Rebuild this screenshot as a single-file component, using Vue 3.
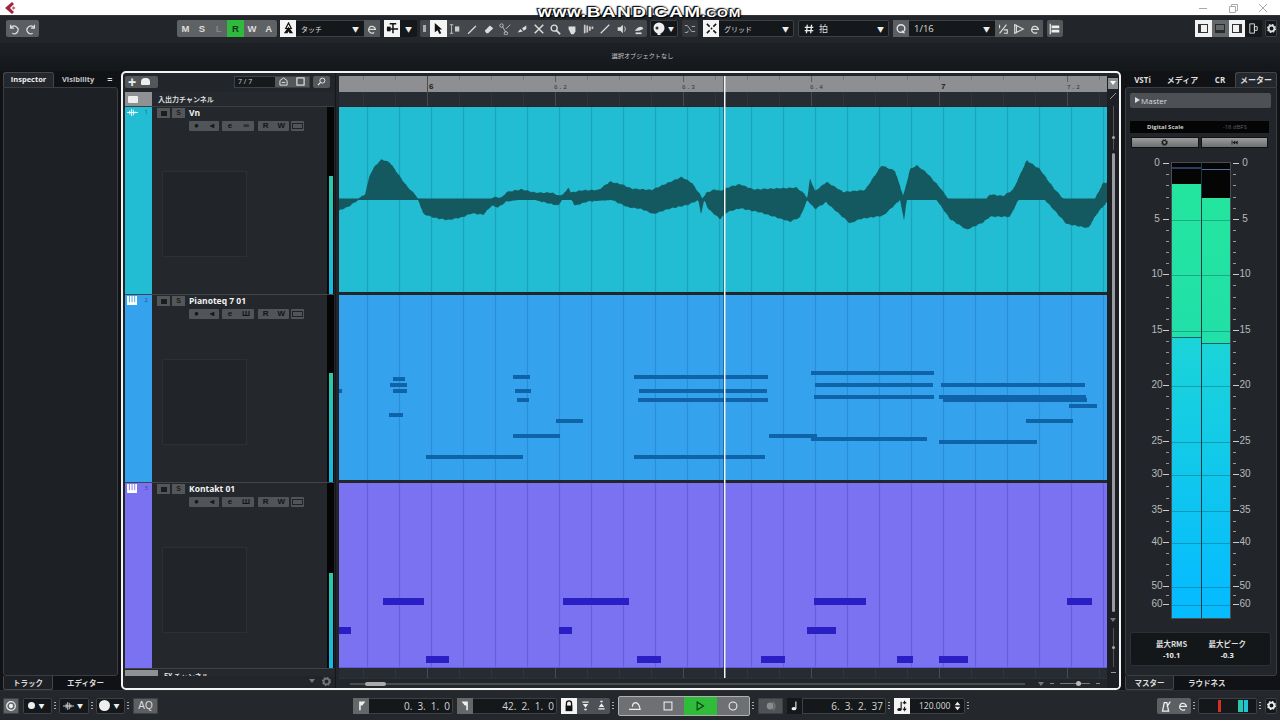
<script setup>
const toolsA = ['M','S','L','R','W','A']
const beats = []
for (let x = 363; x <= 1099; x += 32) beats.push(x)
const lane = (x) => x - 339

const majors = [427, 555, 683, 811, 939, 1067]
const rulerLabels = [
  { x: 429, t: '6', big: true }, { x: 554, t: '6.2' }, { x: 682, t: '6.3' }, { x: 810, t: '6.4' },
  { x: 941, t: '7', big: true }, { x: 1067, t: '7.2' },
]

const CENTER = 199.3
const z8 = (p) => [335 + p[0] / 3, 130 + p[1] / 3]
const z9 = (p) => [720 + p[0] / 3, 130 + p[1] / 3]
const topAnchors = [
  ...[[12,208],[70,208],[90,195],[105,135],[120,110],[140,90],[165,100],[190,135],[215,170],[240,195],[250,208],[470,208],[475,203],[500,205],[515,188],[560,180],[600,190],[650,190],[675,200],[695,185],[700,172],[708,190],[740,183],[790,182],[825,157],[860,165],[890,178],[950,182],[1000,160],[1040,143],[1070,160],[1095,195],[1102,208],[1115,190],[1140,180]].map(z8),
  ...[[0,185],[30,172],[60,165],[100,180],[230,175],[255,195],[262,208],[270,147],[285,185],[320,158],[370,188],[435,182],[485,108],[525,125],[550,200],[570,120],[590,108],[620,130],[660,175],[685,208],[800,208],[810,195],[850,200],[880,180],[920,93],[960,120],[1000,175],[1030,208],[1125,208],[1150,160],[1162,160]].map(z9),
]
const botAnchors = [
  ...[[12,240],[40,228],[70,208],[250,208],[265,250],[300,262],[340,268],[380,260],[410,248],[445,252],[470,225],[490,230],[515,212],[550,208],[600,208],[640,218],[670,225],[680,208],[710,208],[720,225],[760,212],[830,208],[880,230],[920,235],[955,250],[1000,235],[1060,222],[1090,208],[1098,250],[1108,208],[1120,235]].map(z8),
  ...[[0,265],[20,245],[60,233],[120,245],[210,273],[240,260],[262,208],[285,235],[318,215],[390,278],[420,265],[490,255],[540,208],[552,270],[560,208],[650,208],[690,265],[740,297],[790,275],[810,258],[870,258],[895,208],[975,208],[1040,280],[1105,292],[1130,250],[1160,215]].map(z9),
]
const sample = (pts, phase, dir) => {
  const out = []
  let i = 0
  for (let x = 339; x <= 1108; x += 1) {
    while (i < pts.length - 2 && pts[i + 1][0] < x) i++
    const a = pts[i]
    const b = pts[i + 1]
    const t = Math.min(1, Math.max(0, (x - a[0]) / (b[0] - a[0])))
    let y = a[1] + (b[1] - a[1]) * t
    if (Math.abs(y - CENTER) > 1) y += (Math.sin(x * 2.7 + phase) + Math.sin(x * 5.3 + phase * 2)) * 0.45
    out.push([x - 339, y - 107 + dir * 0.7])
  }
  return out
}
const fmt = (p) => `${p[0]},${p[1].toFixed(1)}`
const wavePoints = [...sample(topAnchors, 1, -1), ...sample(botAnchors, 3, 1).reverse()].map(fmt).join(' ')

const blueNotes = [
  [393,377,12,4],[390,383,17,4],[393,389,14,4],[339,389,3,4],[389,413,14,4],
  [513,375,17,4],[515,389,16,4],[517,398,12,4],[556,419,27,4],[513,434,47,4],[426,455,97,4],
  [634,375,134,4],[639,389,128,4],[638,398,130,4],[634,455,131,4],
  [811,371,123,4],[815,383,118,4],[814,395,120,4],[769,434,48,4],[811,437,116,4],
  [941,383,144,4],[939,395,147,4],[943,398,144,4],[1069,404,28,4],[1026,419,47,4],[939,440,98,4],
]
const purpleNotes = [
  [383,598,41,7],[563,598,66,7],[814,598,52,7],[1067,598,25,7],
  [339,627,12,7],[559,627,13,7],[807,627,29,7],
  [426,656,23,7],[637,656,24,7],[761,656,24,7],[897,656,16,7],[939,656,29,7],
]
const tracks = [
  { n: 1, name: 'Vn', cls: 'teal', icon: 'audio', level: 118, mid: 'link', notes: [], top: 107 },
  { n: 2, name: 'Pianoteq 7 01', cls: 'blue', icon: 'keys', level: 109, mid: 'keys', notes: blueNotes, top: 295 },
  { n: 3, name: 'Kontakt 01', cls: 'purple', icon: 'keys', level: 95, mid: 'keys', notes: purpleNotes, top: 483 },
]
const noteStyle = (n, top) => ({ left: `${n[0] - 339}px`, top: `${n[1] - top}px`, width: `${n[2]}px`, height: `${n[3]}px` })

const scale = [
  { v: '0', y: 0 }, { v: '5', y: 56 }, { v: '10', y: 111 }, { v: '15', y: 167 }, { v: '20', y: 222 },
  { v: '25', y: 278 }, { v: '30', y: 311 }, { v: '35', y: 347 }, { v: '40', y: 379 }, { v: '50', y: 423 }, { v: '60', y: 441 },
]
const ticks = [11,22,34,45,67,78,89,100,122,134,145,156,178,189,200,211,233,245,256,267,289,300,323,335,358,368,390,401,412,432]
</script>

<template>
  <div class="app">
    <header class="title">
      <svg class="logo" viewBox="0 0 12 12"><path d="M7 0 0 6l7 6 2-2-4-4 4-4z" fill="#a3243a"/><path d="M8.500 4.200 10.500 6l-2 1.800L6.800 6z" fill="#c9606f"/></svg>
      <div class="winbtns">
        <svg viewBox="0 0 10 10"><path d="M1 5.500h8" stroke="#aaa"/></svg>
        <svg viewBox="0 0 10 10"><path d="M1.500 3.500h6v6h-6zM3.500 3.500v-2h6v6h-2" fill="none" stroke="#aaa"/></svg>
        <svg viewBox="0 0 10 10"><path d="M1 1l8 8M9 1 1 9" stroke="#aaa"/></svg>
      </div>
    </header>
    <div class="watermark"><span class="www">www.</span><b>BANDICAM</b><span class="com">.COM</span></div>

    <div class="toolbar">
      <div class="tgroup undo">
        <svg class="ti" viewBox="0 0 14 14"><path d="M3 2v4h4M3.500 5.500A4.500 4.500 0 1 1 5 12" fill="none" stroke="#ddd" stroke-width="1.500"/></svg>
        <svg class="ti" viewBox="0 0 14 14"><path d="M11 2v4H7M10.500 5.500A4.500 4.500 0 1 0 9 12" fill="none" stroke="#ddd" stroke-width="1.500"/></svg>
      </div>
      <div class="tgroup mode">
        <span v-for="t in toolsA" :key="t" class="mbtn" :class="{ on: t === 'R', dim: t === 'L' }">{{ t }}</span>
      </div>
      <div class="tgroup drop auto">
        <span class="white-ico"><svg viewBox="0 0 14 14"><path d="M7 1 4 7h6z" fill="none" stroke="#111" stroke-width="1.300"/><path d="M7 5l-5 7h4l1-2 1 2h4z" fill="#111"/></svg></span>
        <span class="dd-text">タッチ</span><span class="arrow">▼</span>
        <span class="gbtn"><svg viewBox="0 0 14 14"><path d="M3 7.500h8A4 4 0 1 0 9.500 11" fill="none" stroke="#ddd" stroke-width="1.400"/></svg></span>
      </div>
      <div class="tgroup snapd">
        <span class="white-ico"><svg viewBox="0 0 14 14"><path d="M4 2h7M7.500 2v10M1 7.500h12" stroke="#111" stroke-width="1.600" fill="none"/><path d="M1 5h4v5H1z" fill="#111"/></svg></span>
        <span class="arrow lone">▼</span>
      </div>
      <div class="tgroup tools">
        <span class="handle"></span>
        <span class="white-ico arrowtool"><svg viewBox="0 0 14 14"><path d="M3 1v10l3-2 2 4 2-1-2-4h3z" fill="#111"/></svg></span>
        <svg class="ti" viewBox="0 0 14 14"><path d="M1 2h4M3 2v10M1 12h4" stroke="#ccc" fill="none"/><rect x="7" y="4" width="5" height="6" fill="#ccc"/></svg>
        <svg class="ti" viewBox="0 0 14 14"><path d="M2 12 11 3l1 1-9 9z" fill="#ddd"/></svg>
        <svg class="ti" viewBox="0 0 14 14"><path d="M2 9 8 3l4 3-6 6H4z" fill="#ddd"/></svg>
        <svg class="ti" viewBox="0 0 14 14"><circle cx="3" cy="3" r="2" fill="none" stroke="#ccc"/><circle cx="8" cy="12" r="2" fill="none" stroke="#ccc"/><path d="M4 4l4 7M8 7l5-5" stroke="#ccc" fill="none"/></svg>
        <svg class="ti" viewBox="0 0 14 14"><path d="M2 11l3-4 3 3z" fill="#ddd"/><path d="M7 6l5-3v4l-3 2z" fill="#ddd"/></svg>
        <svg class="ti" viewBox="0 0 14 14"><path d="M2 2l10 10M12 2 2 12" stroke="#ddd" stroke-width="1.700"/></svg>
        <svg class="ti" viewBox="0 0 14 14"><circle cx="6" cy="6" r="3.500" fill="none" stroke="#ddd" stroke-width="1.600"/><path d="M8.500 8.500 13 13" stroke="#ddd" stroke-width="2"/></svg>
        <svg class="ti" viewBox="0 0 14 14"><path d="M3 7V4h8v6l-2 3H6z" fill="#ddd"/></svg>
        <svg class="ti" viewBox="0 0 14 14"><path d="M1 2h2v10H1zM4 3h2v8H4zM7 4h2v5H7zM10 4h2v3h-2z" fill="#ccc"/></svg>
        <svg class="ti" viewBox="0 0 14 14"><path d="M2 12 12 2" stroke="#ddd" stroke-width="1.400"/></svg>
        <svg class="ti" viewBox="0 0 14 14"><path d="M2 5h3l3-3v10L5 9H2z" fill="#ddd"/><path d="M10 4q2 3 0 6" stroke="#ddd" fill="none"/></svg>
        <svg class="ti" viewBox="0 0 14 14"><path d="M2 9q5-6 9-4l1 2-5 2z" fill="#ddd"/><path d="M3 12h7" stroke="#ddd" stroke-width="2"/></svg>
      </div>
      <div class="tgroup color">
        <svg class="ti c" viewBox="0 0 14 14"><circle cx="7" cy="6" r="5.500" fill="#eee"/><circle cx="5" cy="6" r="1.500" fill="#333"/><path d="M7 9v4" stroke="#eee" stroke-width="3"/></svg>
        <span class="arrow lone s">▼</span>
      </div>
      <div class="tgroup one"><svg class="ti" viewBox="0 0 14 14"><path d="M1 3h3l5 7h4M9 4h4M1 11h3l1-2" stroke="#bbb" fill="none"/></svg></div>
      <div class="tgroup drop grid">
        <span class="white-ico"><svg viewBox="0 0 14 14"><path d="M2 2l3 3M12 2 9 5M2 12l3-3M12 12 9 9" stroke="#111" stroke-width="1.600"/><circle cx="7" cy="7" r="1" fill="#111"/></svg></span>
        <span class="dd-text">グリッド</span><span class="arrow">▼</span>
      </div>
      <div class="tgroup drop beat">
        <svg class="ti hash" viewBox="0 0 14 14"><path d="M5 2 4 12M10 2 9 12M2 5h10M2 9h10" stroke="#eee" stroke-width="1.500"/></svg>
        <span class="dd-text han">拍</span><span class="arrow">▼</span>
      </div>
      <div class="tgroup drop quant">
        <span class="gbtn q"><svg viewBox="0 0 14 14"><circle cx="7" cy="6.500" r="4.500" fill="none" stroke="#e4e4e4" stroke-width="1.600"/><path d="M8 9l3 3" stroke="#e4e4e4" stroke-width="1.600"/></svg></span>
        <span class="dd-text q16">1/16</span><span class="arrow">▼</span>
        <span class="gbtn"><svg viewBox="0 0 14 14"><path d="M3 2v4M11 2 3 12M8 8h4v4H8" fill="none" stroke="#ddd" stroke-width="1.300"/></svg></span>
        <span class="gbtn"><svg viewBox="0 0 14 14"><path d="M2 2v10l10-5zM4 2v10" fill="none" stroke="#ddd" stroke-width="1.300"/></svg></span>
        <span class="gbtn"><svg viewBox="0 0 14 14"><path d="M3 7.500h8A4 4 0 1 0 9.500 11" fill="none" stroke="#ddd" stroke-width="1.400"/></svg></span>
      </div>
      <div class="tgroup align"><svg class="ti" viewBox="0 0 14 14"><path d="M1.500 1v12" stroke="#eee" stroke-width="1.400"/><path d="M3 3h9v3H3zM3 8h9v3H3z" fill="#eee"/></svg></div>
      <div class="spacer"></div>
      <div class="tgroup panes">
        <span class="pane on"><i class="pl"></i></span>
        <span class="pane mid"><i class="pb"></i></span>
        <span class="pane on"><i class="pr"></i></span>
        <span class="pane dark"><svg viewBox="0 0 14 14"><path d="M3 2h5v10H3zM8 5h3v4H8z" fill="none" stroke="#ddd"/></svg></span>
      </div>
      <div class="tgroup cog"><svg class="gear" viewBox="0 0 10 10"><circle cx="5" cy="5" r="3.200" fill="none" stroke="#ddd" stroke-width="2"/><circle cx="5" cy="5" r="4.500" fill="none" stroke="#ddd" stroke-width="1.200" stroke-dasharray="1.800 1.730"/></svg></div>
    </div>

    <div class="infoline">選択オブジェクトなし</div>

    <div class="main">
      <aside class="left">
        <div class="tabs lefttabs">
          <span class="tab active">Inspector</span>
          <span class="tab">Visibility</span>
          <span class="eq">=</span>
        </div>
        <div class="panelbox"></div>
        <div class="tabs bottomtabs">
          <span class="btab box">トラック</span>
          <span class="btab open">エディター</span>
        </div>
      </aside>

      <section class="project">
        <div class="tracklist">
          <div class="tlhead">
            <div class="addgroup"><span class="plus">+</span><span class="dot"></span></div>
            <div class="count">
              <span class="cnum">7 / 7</span>
              <span class="cico"><svg viewBox="0 0 10 10"><path d="M1 9V4l4-3 4 3v5z" fill="none" stroke="#eee"/><path d="M3 6h4" stroke="#eee"/></svg></span>
              <span class="cico"><svg viewBox="0 0 10 10"><rect x="1" y="1" width="8" height="8" fill="none" stroke="#eee" stroke-width="1.200"/></svg></span>
            </div>
            <span class="search"><svg viewBox="0 0 10 10"><circle cx="6" cy="4" r="2.800" fill="none" stroke="#eee"/><path d="M4 6 1 9" stroke="#eee" stroke-width="1.300"/></svg></span>
          </div>
          <div class="folder">
            <span class="fswatch"><i></i></span><span class="fname">入出力チャンネル</span>
          </div>
          <div v-for="t in tracks" :key="t.n" class="track" :class="{ last: t.n === 3 }">
            <div class="swatch" :class="t.cls">
              <svg v-if="t.icon === 'audio'" viewBox="0 0 12 10" class="tico"><path d="M0 5h12M3 3v4M5 1v8M7 2v6M9 4v2" stroke="#fff" fill="none"/></svg>
              <svg v-else viewBox="0 0 12 10" class="tico"><path d="M0 0h2v7h1V0h2v7h1V0h2v7h1V0h2v10H0z" fill="#fff"/></svg>
              <span class="tnum">{{ t.n }}</span>
            </div>
            <div class="tbody">
              <div class="trow1">
                <span class="sb"><i></i></span><span class="sb">S</span>
                <span class="tname">{{ t.name }}</span>
              </div>
              <div class="trow2">
                <span class="sgroup"><span class="sbi">●</span><span class="sbi">◂</span></span>
                <span class="sgroup"><span class="sbi">e</span><span class="sbi">{{ t.mid === 'link' ? '∞' : 'Ш' }}</span></span>
                <span class="sgroup"><span class="sbi">R</span><span class="sbi">W</span></span>
                <span class="sgroup"><i class="film"></i></span>
              </div>
              <div class="thumb"></div>
            </div>
            <div class="meterstrip">
              <i :style="{ height: t.level + 'px' }"></i>
            </div>
          </div>
          <div class="folder fx">
            <span class="fswatch"></span><span class="fname">FX チャンネル</span>
          </div>
          <div class="tlfoot">
            <span class="tri"></span>
            <svg class="gear" viewBox="0 0 10 10"><circle cx="5" cy="5" r="3.200" fill="none" stroke="#777" stroke-width="2"/><circle cx="5" cy="5" r="4.500" fill="none" stroke="#777" stroke-width="1.200" stroke-dasharray="1.800 1.730"/></svg>
          </div>
        </div>

        <div class="eventarea">
          <div class="ruler">
            <span v-for="b in beats" :key="'r' + b" class="rtick" :style="{ left: lane(b) + 'px' }"></span>
            <span v-for="m in majors" :key="'rm' + m" class="rmajor" :class="{ bar: m === 427 || m === 939 }" :style="{ left: lane(m) + 'px' }"></span>
            <span v-for="l in rulerLabels" :key="l.t" class="rlabel" :class="{ big: l.big }" :style="{ left: lane(l.x) + 'px' }">{{ l.t }}</span>
          </div>
          <div class="subruler">
            <span v-for="b in beats" :key="'s' + b" class="stick" :style="{ left: lane(b) + 'px' }"></span>
            <span v-for="m in majors" :key="'sm' + m" class="smajor" :style="{ left: lane(m) + 'px' }"></span>
          </div>
          <div v-for="t in tracks" :key="'l' + t.n" class="lane" :class="t.cls">
            <span v-for="b in beats" :key="b" class="beat" :style="{ left: lane(b) + 'px' }"></span>
            <svg v-if="t.n === 1" class="wave" viewBox="0 0 769 185">
              <polygon :points="wavePoints" fill="#14595f" />
            </svg>
            <span v-for="(n, i) in t.notes" :key="i" class="note" :style="noteStyle(n, t.top)"></span>
          </div>
          <div class="subruler tail">
            <span v-for="b in beats" :key="'t' + b" class="stick" :style="{ left: lane(b) + 'px' }"></span>
            <span v-for="m in majors" :key="'tm' + m" class="smajor" :style="{ left: lane(m) + 'px' }"></span>
          </div>
          <div class="hscroll">
            <span class="track-line"><span class="hthumb"></span></span>
            <span class="zoomer"><span class="tri"></span><span class="minus"></span><span class="zline"><i></i></span><span class="minus"></span></span>
          </div>
          <span class="playhead"></span>
          <div class="vscroll">
            <span class="vmenu"></span>
            <svg class="pencil" viewBox="0 0 8 8"><path d="M1 7 7 1" stroke="#999"/></svg>
            <span class="vs1"><i></i></span>
            <span class="vs2"></span>
            <span class="tri vtri"></span>
            <span class="vs3"><i></i></span>
            <span class="vplus"></span>
          </div>
        </div>
      </section>

      <aside class="right">
        <div class="tabs righttabs">
          <span class="rtab w1">VSTi</span><span class="rtab w2">メディア</span><span class="rtab w3">CR</span><span class="rtab active">メーター</span>
        </div>
        <div class="rbox">
          <div class="master"><i class="mtri"></i>Master</div>
          <div class="digital"><b>Digital Scale</b><span>-18 dBFS</span></div>
          <div class="btnrow">
            <span class="rb"><svg viewBox="0 0 10 10"><circle cx="5" cy="5" r="2.800" fill="none" stroke="#111" stroke-width="1.600"/><circle cx="5" cy="5" r="4.300" fill="none" stroke="#111" stroke-width="1.200" stroke-dasharray="1.700 1.680"/></svg></span>
            <span class="rb"><svg viewBox="0 0 10 10"><path d="M1.500 2v6" stroke="#111" stroke-width="1.200"/><path d="M6 2v6L2.500 5zM9.500 2v6L6 5z" fill="#111"/></svg></span>
          </div>
          <div class="meter">
            <div class="scale lefts">
              <template v-for="s in scale" :key="s.v">
                <span class="snum" :style="{ top: s.y + 'px' }">{{ s.v }}</span>
                <span class="bigtick" :style="{ top: s.y + 'px' }"></span>
              </template>
              <span v-for="k in ticks" :key="k" class="smalltick" :style="{ top: k + 'px' }"></span>
            </div>
            <div class="bars">
              <div class="bar"><div class="peakline"></div><div class="fill f1"><i class="rms r1"></i></div></div>
              <div class="bar"><div class="peakline p2"></div><div class="fill f2"><i class="rms r2"></i></div></div>
              <span v-for="s in scale.slice(1)" :key="'g' + s.v" class="barmark" :style="{ top: s.y + 'px' }"></span>
            </div>
            <div class="scale rights">
              <template v-for="s in scale" :key="s.v">
                <span class="snum" :style="{ top: s.y + 'px' }">{{ s.v }}</span>
                <span class="bigtick" :style="{ top: s.y + 'px' }"></span>
              </template>
              <span v-for="k in ticks" :key="k" class="smalltick" :style="{ top: k + 'px' }"></span>
            </div>
          </div>
          <div class="maxbox">
            <div><span>最大RMS</span><b>-10.1</b></div>
            <div><span>最大ピーク</span><b>-0.3</b></div>
          </div>
        </div>
        <div class="tabs bottomtabs rb2">
          <span class="btab box">マスター</span>
          <span class="btab open">ラウドネス</span>
        </div>
      </aside>
    </div>

    <footer class="transport">
      <span class="pgroup cpu"><svg viewBox="0 0 14 14"><circle cx="7" cy="7" r="5" fill="none" stroke="#eee" stroke-width="1.400"/><circle cx="7" cy="7" r="2.500" fill="#eee"/></svg></span>
      <span class="pgroup dd d1"><i class="wdot"></i><span class="arrow lone s">▼</span></span><span class="hdl"></span>
      <span class="pgroup dd d2"><svg class="ti" viewBox="0 0 14 14"><path d="M0 7h14M4 4v6M6 2v10M8 3v8M10 5v4" stroke="#eee" fill="none"/></svg><span class="arrow lone s">▼</span></span><span class="hdl"></span>
      <span class="pgroup dd d3"><i class="wdot big"></i><span class="arrow lone s">▼</span></span><span class="hdl"></span>
      <span class="pgroup aq">AQ</span>
      <span class="flexgap"></span>
      <span class="locator"><span class="flag"><svg viewBox="0 0 14 14"><path d="M4 13V2h8L8 7H6v6z" fill="#eee"/></svg></span><span class="lnum">0.  3.  1.   0</span></span>
      <span class="locator l2"><span class="flag"><svg viewBox="0 0 14 14"><path d="M10 13V2H2l4 5h2v6z" fill="#eee"/></svg></span><span class="lnum">42.  2.  1.   0</span></span>
      <span class="lockg"><span class="lockw"><svg viewBox="0 0 14 14"><path d="M4 7V4a3 3 0 0 1 6 0v3" fill="none" stroke="#111" stroke-width="1.500"/><rect x="3" y="6.500" width="8" height="6.500" fill="#111"/></svg></span>
        <svg class="lk" viewBox="0 0 14 14"><path d="M3 2h8v1.500H3zM3.500 5h7L7 10zM5.500 11h3v2h-3z" fill="#eee"/></svg>
        <svg class="lk" viewBox="0 0 14 14"><path d="M5.500 1h3v2h-3zM7 4l3.500 5h-7zM3 10.500h8V12H3z" fill="#eee"/></svg>
      </span><span class="hdl"></span>
      <span class="ctrl">
        <span class="cb"><svg viewBox="0 0 16 14"><path d="M1 11h13Q13 4 9 3 5 3 5 8" fill="none" stroke="#eee" stroke-width="1.400"/></svg></span>
        <span class="cb"><svg viewBox="0 0 14 14"><rect x="1.500" y="1.500" width="11" height="11" fill="none" stroke="#eee" stroke-width="1.500"/></svg></span>
        <span class="cb play"><svg viewBox="0 0 14 14"><path d="M3 1.500v11l9-5.500z" fill="none" stroke="#0c3a12" stroke-width="1.500"/></svg></span>
        <span class="cb"><svg viewBox="0 0 14 14"><circle cx="7" cy="7" r="5.500" fill="none" stroke="#eee" stroke-width="1.500"/></svg></span>
      </span><span class="hdl"></span>
      <span class="pgroup pre"><svg viewBox="0 0 14 14"><circle cx="6" cy="7" r="4" fill="#8a8c8e"/><path d="M9 2a6 6 0 0 1 0 10" fill="none" stroke="#777" stroke-width="1.500"/></svg></span>
      <span class="locator l3"><span class="flag note2"><svg viewBox="0 0 14 14"><ellipse cx="5" cy="11" rx="3" ry="2.200" fill="#eee"/><path d="M7.500 11V2" stroke="#eee" stroke-width="1.400"/></svg></span><span class="lnum">6.  3.  2.  37</span></span><span class="hdl"></span>
      <span class="tempo"><span class="lockw"><svg viewBox="0 0 14 14"><ellipse cx="4" cy="11" rx="2.500" ry="1.800" fill="#111"/><path d="M6 11V2" stroke="#111" stroke-width="1.300"/><path d="M10 5V1M10 13V8M8 4l2-2 2 2M8 10l2 2 2-2" fill="none" stroke="#111" stroke-width="1.200"/></svg></span><span class="tnumb">120.000</span>
        <svg class="updown" viewBox="0 0 10 14"><path d="M1 6l4-5 4 5zM1 8l4 5 4-5z" fill="#eee"/></svg>
      </span><span class="hdl"></span>
      <span class="flexgap second"></span>
      <span class="metro">
        <svg class="ti" viewBox="0 0 14 14"><path d="M3 13 5 3h3l2 10zM8 8l4-6" fill="none" stroke="#eee" stroke-width="1.500"/></svg>
        <svg class="ti" viewBox="0 0 14 14"><path d="M3 7.500h8A4 4 0 1 0 9.500 11" fill="none" stroke="#eee" stroke-width="1.400"/></svg>
      </span><span class="hdl"></span>
      <span class="activity"><i class="red"></i><i class="cy"></i></span><span class="hdl"></span>
      <span class="pgroup gearb"><svg class="gear" viewBox="0 0 10 10"><circle cx="5" cy="5" r="3.200" fill="none" stroke="#eee" stroke-width="2"/><circle cx="5" cy="5" r="4.500" fill="none" stroke="#eee" stroke-width="1.200" stroke-dasharray="1.800 1.730"/></svg></span>
    </footer>
  </div>
</template>

<style>
html, body { margin: 0; background: #1c1f23; overflow: hidden; }
</style>

<style scoped>
.app { width: 1280px; height: 720px; display: flex; flex-direction: column; position: relative; overflow: hidden; background: #1a1d21; font-family: "Open Sans", "Noto Sans CJK JP", sans-serif; color: #ddd; }
.title { height: 16px; box-sizing: border-box; background: #fff; display: flex; align-items: center; justify-content: space-between; flex: none; border-bottom: 1px solid #333; }
.logo { width: 12px; height: 12px; margin-left: 5px; }
.winbtns { display: flex; gap: 20px; margin-right: 12px; }
.winbtns svg { width: 10px; height: 10px; }
.watermark { position: absolute; left: 541px; top: 3px; width: 197px; display: flex; align-items: baseline; justify-content: center; font-family: "Liberation Sans", sans-serif; color: #fff; line-height: 18px; text-shadow: 0 0 1px #000, 0 0 2px #000, 1px 1px 1px #000, -1px -1px 1px #000; z-index: 5; white-space: nowrap; transform: scaleX(1.27); }
.www { font-size: 14px; font-weight: 700; letter-spacing: .6px; }
.watermark b { font-size: 15px; font-weight: 700; letter-spacing: 1.100px; }
.com { font-size: 11px; font-weight: 700; letter-spacing: .6px; }

.toolbar { height: 27px; background: #22262a; display: flex; align-items: center; flex: none; padding: 0 3px 2px 6px; box-sizing: border-box; }
.tgroup { height: 17px; display: flex; align-items: center; border-radius: 2px; background: #5b5e62; flex: none; }
.undo { width: 33px; justify-content: space-around; margin-right: 138px; }
.mode { width: 100px; background: #5f6265; }
.mbtn { flex: 1; height: 17px; text-align: center; font: 700 9.500px/17px "Liberation Sans", sans-serif; color: #ddd; }
.mbtn.on { background: #2fba3e; color: #12361a; }
.mbtn.dim { color: #858585; }
.white-ico { width: 16px; height: 17px; background: #f4f4f4; display: flex; align-items: center; justify-content: center; flex: none; }
.white-ico svg { width: 13px; height: 13px; }
.drop { background: #15181b; box-shadow: inset 0 0 0 1px #3d4044; }
.auto { width: 100px; margin-left: 3px; }
.dd-text { font-size: 7px; color: #ddd; margin-left: 5px; flex: 1; }
.arrow { font-size: 7px; color: #eee; margin-right: 5px; }
.arrow.lone { margin: 0 auto; }
.arrow.s { margin: 0 2px; font-size: 6px; }
.gbtn { width: 16px; height: 17px; background: #54575a; display: flex; align-items: center; justify-content: center; flex: none; }
.gbtn svg { width: 12px; height: 12px; }
.snapd { width: 33px; margin-left: 4px; background: #15181b; }
.tools { width: 227px; margin-left: 3px; background: #44474b; }
.handle { width: 3px; height: 7px; background: #aaa; margin: 0 4px 0 3px; flex: none; }
.arrowtool { margin: 0; width: 17px; }
.ti { width: 12px; height: 12px; flex: none; }
.tools .ti { margin: 0 2.330px; }
.color { width: 28px; margin-left: 3px; background: #15181b; box-shadow: inset 0 0 0 1px #3d4044; padding-left: 2px; box-sizing: border-box; }
.ti.c { width: 14px; height: 14px; }
.one { width: 16px; margin-left: 4px; justify-content: center; background: #33363a; }
.grid { width: 91px; margin-left: 5px; }
.beat { width: 91px; margin-left: 4px; }
.hash { margin-left: 5px; }
.han { font-size: 9px; margin-left: 4px; }
.quant { width: 150px; margin-left: 4px; }
.gbtn.q { background: #5b5e62; }
.q16 { font-size: 9.500px; margin-left: 5px; }
.align { width: 16px; margin-left: 4px; justify-content: center; background: #55585b; }
.spacer { flex: 1; }
.panes { background: transparent; }
.pane { width: 16.750px; height: 17px; display: flex; align-items: center; justify-content: center; }
.pane.on { background: #f2f2f2; }
.pane.mid { background: #65686b; }
.pane.dark { background: #15181b; }
.pane svg { width: 13px; height: 13px; }
.pane i { display: block; width: 10px; height: 9px; border: 1px solid #333; box-sizing: border-box; }
.pane .pl { border-left-width: 3px; }
.pane .pb { border-bottom-width: 3px; border-color: #2a2a2a; }
.pane .pr { border-right-width: 3px; }
.cog { width: 12px; margin-left: 3px; justify-content: center; background: #15181b; box-shadow: inset 0 0 0 1px #3d4044; }
.gear { width: 9px; height: 9px; }

.infoline { height: 28px; flex: none; font-size: 6.200px; color: #c8c8c8; text-align: center; line-height: 26px; padding-left: 5px; box-sizing: border-box; background: linear-gradient(#1e2125, #14171a); }

.main { height: 619px; display: flex; flex: none; background: #101215; }
.left { width: 120px; flex: none; display: flex; flex-direction: column; padding: 1px 0 0 3px; box-sizing: border-box; }
.tabs { display: flex; align-items: center; flex: none; }
.lefttabs { height: 15px; font: 700 7.500px/15px "Open Sans", sans-serif; }
.tab { color: #c5c7c9; padding: 0 0 0 8px; }
.tab.active { background: #24272b; border-radius: 3px 3px 0 0; color: #eee; width: 51px; padding: 0; text-align: center; box-shadow: inset 1px 1px 0 #44474a, inset -1px 0 0 #44474a; height: 15px; }
.eq { margin-left: 13px; font-size: 9px; }
.panelbox { height: 589px; background: #1d2024; border: 1px solid #3a3d41; border-radius: 0 3px 3px 3px; margin-right: 2px; box-sizing: border-box; flex: none; }
.bottomtabs { height: 14px; font: 700 7.500px/14px "Noto Sans CJK JP", sans-serif; color: #ddd; }
.btab { height: 14px; }
.btab.box { width: 50px; text-align: center; background: #1d2024; border-radius: 0 0 3px 3px; box-shadow: inset 1px 0 0 #44474a, inset 0 -1px 0 #44474a, inset -1px 0 0 #44474a; }
.btab.open { flex: 1; padding-left: 14px; }

.project { width: 1000px; height: 619px; margin-left: 1px; box-sizing: border-box; border: 2px solid #f3f3f3; border-radius: 5px; background: #22262a; display: flex; flex: none; position: relative; overflow: hidden; }
.tracklist { width: 213px; flex: none; display: flex; flex-direction: column; padding: 0 1px 0 2px; box-sizing: border-box; border-right: 1px solid #15171a; margin-right: 3px; }
.tlhead { height: 19px; padding-bottom: 2px; box-sizing: border-box; display: flex; align-items: center; flex: none; }
.addgroup { width: 33px; height: 12px; background: #54575a; border-radius: 2px; display: flex; align-items: center; gap: 5px; padding-left: 3px; box-sizing: border-box; flex: none; }
.plus { font: 700 14px/12px "Liberation Sans", sans-serif; color: #eee; }
.dot { width: 9px; height: 7px; background: #eee; border-radius: 4px 4px 1px 1px; }
.count { margin-left: 76px; width: 76px; height: 12px; display: flex; background: #161a1d; border: 1px solid #3d4044; box-sizing: border-box; align-items: center; flex: none; }
.cnum { font-size: 7px; color: #ccc; flex: 1; padding-left: 3px; }
.cico { width: 17px; height: 10px; background: #55585b; display: flex; align-items: center; justify-content: center; }
.cico svg { width: 9px; height: 9px; }
.search { margin-left: 3px; width: 17px; height: 12px; background: #55585b; border-radius: 2px; display: flex; align-items: center; justify-content: center; flex: none; }
.search svg { width: 9px; height: 9px; }
.folder { height: 15px; display: flex; flex: none; align-items: center; background: #25292d; border-bottom: 1px solid #3c3f43; box-sizing: border-box; }
.fswatch { width: 27px; height: 14px; background: #8f9194; display: flex; align-items: center; flex: none; }
.fswatch i { display: block; width: 10px; height: 7px; margin-left: 3px; background: #eee; border-radius: 1px; }
.fname { font: 700 7px/14px "Noto Sans CJK JP", sans-serif; margin-left: 6px; color: #ddd; white-space: nowrap; }
.track { height: 188px; display: flex; flex: none; position: relative; border-bottom: 1px solid #41454a; box-sizing: border-box; }
.track.last { height: 186px; }
.swatch { width: 27px; flex: none; position: relative; }
.tico { position: absolute; left: 2px; top: 1px; width: 11px; height: 9px; }
.tnum { position: absolute; right: 4px; top: 1px; font-size: 6px; line-height: 8px; color: #123; opacity: .6; }
.teal { background: #22bdd3; }
.blue { background: #35a2ee; }
.purple { background: #7b72f2; }
.tbody { flex: 1; position: relative; background: #24272b; }
.trow1 { height: 10px; margin: 1px 0 0 5px; display: flex; align-items: center; gap: 2px; }
.sb { width: 13px; height: 10px; background: #54575a; color: #1a1a1a; font: 700 7px/10px "Liberation Sans", sans-serif; text-align: center; display: flex; align-items: center; justify-content: center; flex: none; }
.sb i { display: block; width: 6px; height: 5px; background: #1c1c1c; }
.tname { font: 700 8.500px/12px "Open Sans", sans-serif; color: #f2f2f2; margin-left: 2px; white-space: nowrap; }
.trow2 { height: 10px; margin: 3px 0 0 37px; display: flex; gap: 3px; }
.sgroup { width: 30px; height: 10px; background: #515458; border-radius: 1px; display: flex; align-items: center; justify-content: center; flex: none; }
.sgroup:nth-child(2) { width: 32px; }
.sgroup:nth-child(3) { width: 31px; margin-left: 1px; }
.sgroup:nth-child(4) { width: 13px; margin-left: -1px; }
.film { display: block; width: 9px; height: 4px; border: 1px solid #222; }
.sbi { flex: 1; text-align: center; font: 700 8px/10px "Liberation Sans", sans-serif; color: #141414; overflow: hidden; }
.thumb { position: absolute; left: 10px; top: 64px; width: 85px; height: 86px; background: #212428; border: 1px solid #2c2f33; box-sizing: border-box; }
.meterstrip { width: 7px; flex: none; background: #050505; display: flex; align-items: flex-end; justify-content: center; }
.meterstrip i { display: block; width: 4px; background: linear-gradient(#2ec8a8, #14b8e6); }
.fx { margin-top: 1px; height: 6px; overflow: hidden; border-bottom: none; align-items: flex-start; }
.fx .fswatch { height: 6px; width: 33px; }
.fx .fname { line-height: 12px; }
.tlfoot { height: 10px; display: flex; align-items: center; justify-content: flex-end; gap: 7px; padding-right: 3px; flex: none; }
.tri { display: block; width: 0; height: 0; border: 3.500px solid transparent; border-top: 4px solid #777; border-bottom: 0; }

.eventarea { flex: 1; position: relative; display: flex; flex-direction: column; padding-right: 12px; }
.ruler { height: 16px; margin-top: 3px; background: #8d8f92; position: relative; flex: none; }
.rtick { position: absolute; top: 0; height: 4px; width: 1px; background: #777; }
.rmajor { position: absolute; top: 0; height: 6px; width: 1px; background: #5a5c5f; }
.rmajor.bar { height: 16px; background: #4a4c4f; }
.rlabel { position: absolute; top: 7px; font: 6px/9px "Liberation Mono", monospace; color: #333; letter-spacing: 1px; }
.rlabel.big { top: 6px; font: 700 8px/9px "Liberation Sans", sans-serif; color: #1a1a1a; letter-spacing: 0; }
.subruler { height: 15px; position: relative; flex: none; background: #272c33; border-bottom: 1px solid #22262a; box-sizing: border-box; }
.stick { position: absolute; top: 0; bottom: 0; width: 1px; background: #30353c; }
.smajor { position: absolute; top: 0; bottom: 0; width: 1px; background: #474b50; }
.lane { height: 185px; margin-bottom: 3px; position: relative; flex: none; overflow: hidden; }
.lane.purple { margin-bottom: 0; height: 184px; }
.lane .beat { position: absolute; top: 0; bottom: 0; width: 1px; }
.teal .beat { background: #1aa3b9; box-shadow: 0 0 1px #1aa3b9; }
.blue .beat { background: #2a8fd6; box-shadow: 0 0 1px #2a8fd6; }
.purple .beat { background: #6860d8; box-shadow: 0 0 1px #6860d8; }
.wave { position: absolute; left: 0; top: 0; width: 769px; height: 185px; }
.note { position: absolute; }
.blue .note { background: #0f63a8; }
.purple .note { background: #2a1fc4; }
.tail { height: 11px; border-top: 1px solid #5a5fd0; border-bottom: none; }
.hscroll { height: 10px; display: flex; align-items: center; position: relative; flex: none; background: #22262a; border-top: 1px solid #2d3035; box-sizing: border-box; }
.track-line { width: 675px; margin-left: 11px; height: 2px; background: #4a4d50; position: relative; display: block; flex: none; }
.hthumb { position: absolute; left: 15px; width: 21px; height: 4px; top: -1px; background: #aaa; border-radius: 2px; }
.zoomer { display: flex; align-items: center; margin-left: 13px; gap: 6px; flex: none; }
.minus { width: 4px; height: 1px; background: #888; }
.zline { width: 30px; height: 1px; background: #777; position: relative; }
.zline i { position: absolute; left: 16px; top: -2px; width: 5px; height: 5px; border-radius: 50%; background: #bbb; }
.playhead { position: absolute; left: 385px; top: 3px; bottom: 10px; width: 1px; background: #f2f4f5; box-shadow: -1px 0 0 rgba(20, 40, 50, .45), 1px 0 0 rgba(230, 240, 240, .5); }
.vscroll { position: absolute; right: 0; top: 3px; bottom: 0; width: 12px; display: flex; flex-direction: column; align-items: center; background: #1c1f23; }
.vmenu { width: 10px; height: 11px; background: #8d8f92; flex: none; margin-top: 2px; position: relative; }
.vmenu::after { content: ""; position: absolute; left: 2px; top: 3px; border: 3px solid transparent; border-top: 4px solid #fff; border-bottom: 0; }
.pencil { width: 8px; height: 8px; margin: 3px 0; flex: none; }
.vs1 { width: 1px; height: 44px; background: #555; position: relative; display: block; margin-top: 3px; flex: none; }
.vs1 i { position: absolute; left: -1px; top: 30px; width: 3px; height: 3px; background: #aaa; border-radius: 50%; }
.vs2 { width: 3px; height: 459px; background: #9a9c9f; margin-top: 3px; display: block; border-radius: 2px; flex: none; }
.vtri { margin: 6px 0 3px; flex: none; }
.vs3 { width: 1px; height: 39px; background: #555; position: relative; display: block; margin-top: 3px; flex: none; }
.vs3 i { position: absolute; left: -1px; top: 18px; width: 3px; height: 3px; background: #aaa; border-radius: 50%; }
.vplus { width: 5px; height: 1px; margin-top: 5px; background: #999; flex: none; }

.right { width: 155px; flex: none; display: flex; flex-direction: column; margin-left: 4px; padding: 1px 3px 0 0; box-sizing: border-box; }
.righttabs { height: 15px; font: 700 8px/15px "Open Sans", "Noto Sans CJK JP", sans-serif; }
.rtab { color: #ddd; text-align: center; flex: none; white-space: nowrap; }
.w1 { width: 35px; }
.w2 { width: 45px; }
.w3 { width: 30px; }
.rtab.active { background: #24272b; flex: 1; border-radius: 3px 3px 0 0; box-shadow: inset 1px 1px 0 #44474a, inset -1px 0 0 #44474a; }
.rbox { height: 589px; box-sizing: border-box; background: #22262a; border: 1px solid #3a3d41; border-radius: 3px 0 3px 3px; padding: 5px 5px 0 4px; display: flex; flex-direction: column; flex: none; }
.master { height: 15px; background: #4d5054; border-radius: 2px; font: 400 8px/15px "Open Sans", sans-serif; color: #ddd; padding: 0 0 1px 5px; box-sizing: border-box; flex: none; display: flex; align-items: center; }
.mtri { display: block; border: 3px solid transparent; border-left: 5px solid #ddd; border-right: 0; margin-right: 1px; }
.digital { height: 12px; margin: 13px 2px 0 0; background: #050505; display: flex; justify-content: space-between; font-size: 6px; line-height: 12px; padding: 0 22px 0 17px; flex: none; box-sizing: border-box; }
.digital b { color: #ccc; }
.digital span { color: #5c5f63; }
.btnrow { display: flex; gap: 2px; margin: 4px 3px 0 1px; height: 11px; flex: none; }
.rb { flex: 1; background: linear-gradient(#9b9d9f, #6d6f72); border: 1px solid #111; box-sizing: border-box; display: flex; align-items: center; justify-content: center; }
.rb svg { width: 7px; height: 7px; }
.meter { height: 457px; margin: 14px 0 0 3px; display: flex; position: relative; flex: none; }
.scale { width: 38px; position: relative; flex: none; margin-top: -4px; }
.snum { position: absolute; width: 12px; text-align: center; font: 400 10px/10px "Liberation Sans", sans-serif; color: #b8babc; white-space: nowrap; }
.bigtick { position: absolute; height: 1px; width: 6px; background: #ccc; margin-top: 5px; }
.smalltick { position: absolute; height: 1px; width: 3px; background: #999; margin-top: 5px; }
.lefts .snum { right: 8px; }
.lefts .bigtick { right: 2px; }
.lefts .smalltick { right: 2px; }
.rights .snum { left: 8px; }
.rights .bigtick { left: 2px; }
.rights .smalltick { left: 2px; }
.bars { width: 60px; height: 457px; display: flex; gap: 1px; background: #1a3a42; border: 1px solid #4a4d50; box-sizing: border-box; position: relative; flex: none; }
.bar { flex: 1; background: #050505; position: relative; display: flex; flex-direction: column; justify-content: flex-end; }
.peakline { position: absolute; left: 0; right: 0; top: 4px; height: 2px; background: #2c3c60; }
.peakline.p2 { top: 6px; height: 1px; background: #5570a0; }
.fill { position: relative; background: linear-gradient(#23e59e 0%, #20dcb0 60%, #1fcdbf 100%); }
.f1 { height: 434px; }
.f2 { height: 420px; }
.rms { position: absolute; left: 0; right: 0; bottom: 0; background: linear-gradient(#1bd4d8, #06bcff 92%); border-top: 1px solid #15606a; }
.r1 { height: 280px; }
.r2 { height: 274px; }
.barmark { position: absolute; left: 0; right: 0; height: 1px; margin-top: 1px; background: rgba(10, 90, 90, .4); }
.maxbox { height: 34px; margin-top: 13px; box-sizing: border-box; background: #14171a; border: 1px solid #2c2f33; border-radius: 3px; display: flex; justify-content: space-between; align-items: center; flex: none; padding: 0 24px 0 25px; }
.maxbox div { display: flex; flex-direction: column; align-items: center; gap: 1px; }
.maxbox span { font: 700 7.500px/10px "Noto Sans CJK JP", sans-serif; color: #ddd; white-space: nowrap; }
.maxbox b { font: 700 7.500px/10px "Open Sans", sans-serif; color: #eee; }
.rb2 .btab.box { width: 49px; background: #22262a; }

.transport { height: 30px; flex: none; background: #24272b; display: flex; align-items: center; padding: 0 0 0 3px; box-sizing: border-box; border-top: 1px solid #2c2f33; }
.pgroup { height: 16px; display: flex; align-items: center; justify-content: center; border-radius: 2px; background: #15181b; box-shadow: inset 0 0 0 1px #3d4044; flex: none; }
.cpu { width: 16px; background: #616467; }
.cpu svg { width: 12px; height: 12px; }
.dd { gap: 1px; }
.d1 { width: 29px; margin-left: 4px; }
.d2 { width: 30px; margin-left: 2px; }
.d3 { width: 29px; margin-left: 2px; }
.wdot { width: 7px; height: 7px; background: #eee; border-radius: 50%; display: block; }
.wdot.big { width: 11px; height: 11px; }
.dd .ti { width: 11px; }
.hdl { width: 2px; height: 7px; margin: 0 1.500px; flex: none; background: repeating-linear-gradient(#aaa 0 1px, transparent 1px 3px); }
.aq { width: 25px; margin-left: 3px; background: #5d6063; font: 10px/16px "Liberation Sans", sans-serif; color: #ddd; }
.flexgap { width: 195px; flex: none; }
.flexgap.second { width: 187px; }
.locator { width: 100px; height: 16px; display: flex; background: #15181b; box-shadow: inset 0 0 0 1px #3d4044; border-radius: 2px; flex: none; font: 10px/16px "Open Sans", sans-serif; color: #d6d6d6; white-space: pre; word-spacing: 2.500px; }
.l2 { margin-left: 4px; }
.flag { width: 16px; height: 16px; background: #65686b; display: flex; align-items: center; justify-content: center; flex: none; }
.flag svg { width: 11px; height: 11px; }
.lnum { flex: 1; text-align: right; padding-right: 3px; }
.lockg { width: 49px; height: 16px; margin-left: 4px; display: flex; align-items: center; background: #4e5155; border-radius: 2px; flex: none; }
.lockw { width: 16px; height: 16px; background: #f4f4f4; display: flex; align-items: center; justify-content: center; flex: none; }
.lockw svg { width: 12px; height: 12px; }
.lk { width: 11px; height: 11px; margin: 0 2.500px; flex: none; }
.ctrl { width: 132px; height: 20px; margin-left: 3px; box-sizing: border-box; background: #6e7073; border: 1px solid #aeb0b2; border-radius: 2px; display: flex; flex: none; }
.cb { flex: 1; display: flex; align-items: center; justify-content: center; }
.cb svg { width: 10px; height: 10px; }
.cb:first-child svg { width: 14px; height: 12px; }
.play { background: #2ebc3a; }
.pre { width: 25px; margin-left: 3px; background: #505356; }
.pre svg { width: 12px; height: 12px; }
.l3 { width: 99px; margin-left: 4px; }
.note2 { background: #15181b; box-shadow: inset -1px 0 0 #3d4044; }
.tempo { width: 71px; height: 16px; margin-left: 3px; display: flex; align-items: center; flex: none; background: #15181b; box-shadow: inset 0 0 0 1px #3d4044; border-radius: 2px; font: 8.500px/16px "Open Sans", sans-serif; color: #ddd; }
.tnumb { margin-left: 9px; flex: 1; }
.updown { width: 7px; height: 10px; margin-right: 4px; flex: none; }
.metro { width: 34px; height: 16px; display: flex; justify-content: space-around; align-items: center; background: #5d6063; border-radius: 2px; flex: none; }
.activity { width: 59px; height: 16px; margin-left: 2px; background: #15181b; box-shadow: inset 0 0 0 1px #3d4044; border-radius: 2px; position: relative; flex: none; }
.activity i { position: absolute; top: 2px; bottom: 2px; display: block; }
.activity .red { left: 20px; width: 3px; background: #d8301f; }
.activity .cy { left: 40px; width: 10px; background: linear-gradient(90deg, #28c8b0 0 45%, #15303a 45% 55%, #22c4d8 55%); }
.gearb { width: 12px; margin-left: 3px; }
</style>
